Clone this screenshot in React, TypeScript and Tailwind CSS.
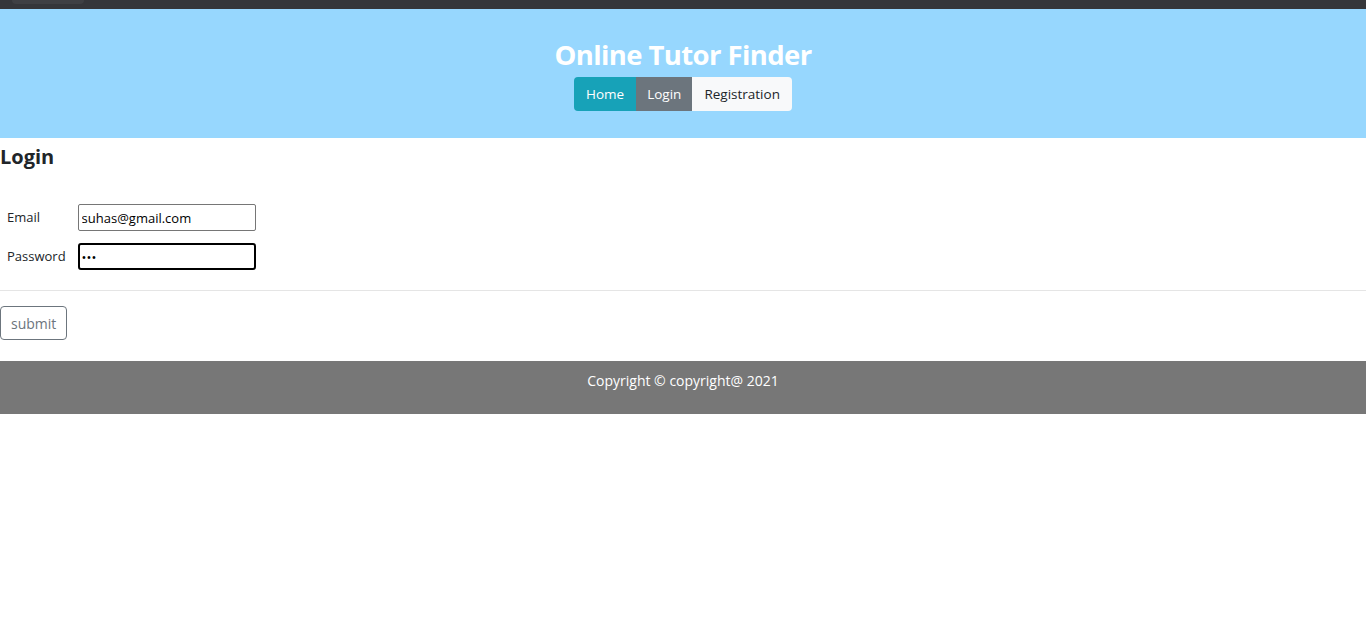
import React from 'react';

const App = () => {
  return (
    <div className="min-h-[641px] bg-white text-[#212529]" style={{ fontFamily: '"Open Sans", "Noto Sans", sans-serif' }}>
      {/* browser strip */}
      <div className="h-[9px] bg-[#35363a] flex items-start pl-[12px]">
        <div className="w-[72px] h-[4px] bg-[#3f4044] rounded-b-[6px]" />
      </div>

      <header className="bg-[#97d7fe] h-[129px] flex flex-col items-center pt-[28px]">
        <h1 className="text-white font-bold text-[27.5px] leading-[36px] tracking-[-0.6px]">Online Tutor Finder</h1>
        <div className="flex mt-[4px] text-[13.5px]">
          <button className="h-[34px] px-[12px] bg-[#17a2b8] text-white rounded-l-[4px]">Home</button>
          <button className="h-[34px] px-[11px] bg-[#6c757d] text-white">Login</button>
          <button className="h-[34px] px-[12px] bg-[#f8f9fa] text-[#212529] rounded-r-[4px]">Registration</button>
        </div>
      </header>

      <main>
        <h2 className="font-bold text-[20px] leading-[36px] pt-[1px]">Login</h2>
        <table className="mt-[25px] ml-[2px] border-separate border-spacing-[4px] text-[13px]">
          <tbody>
            <tr>
              <td className="pr-[8px] pl-[1px]">Email</td>
              <td>
                <input
                  defaultValue="suhas@gmail.com"
                  className="w-[178px] h-[27px] border border-[#767676] rounded-[2px] px-[3px] text-[13px] text-black outline-none"
                />
              </td>
            </tr>
            <tr>
              <td className="pr-[8px] pl-[1px] pt-[8px]">Password</td>
              <td className="pt-[8px]">
                <input
                  type="password"
                  defaultValue="abc"
                  className="w-[178px] h-[27px] border-2 border-black rounded-[3px] px-[2px] text-[13px] text-black outline-none"
                />
              </td>
            </tr>
          </tbody>
        </table>
        <hr className="mt-[16px] border-t border-[#e5e5e5]" />
        <button className="mt-[15px] h-[34px] px-[10px] border border-[#6c757d] text-[#6c757d] rounded-[4px] text-[14px]">submit</button>
      </main>

      <footer className="mt-[21px] h-[53px] bg-[#777777] text-white text-[14px] text-center pt-[9px]">
        Copyright © copyright@ 2021
      </footer>
    </div>
  );
};

export default App;
